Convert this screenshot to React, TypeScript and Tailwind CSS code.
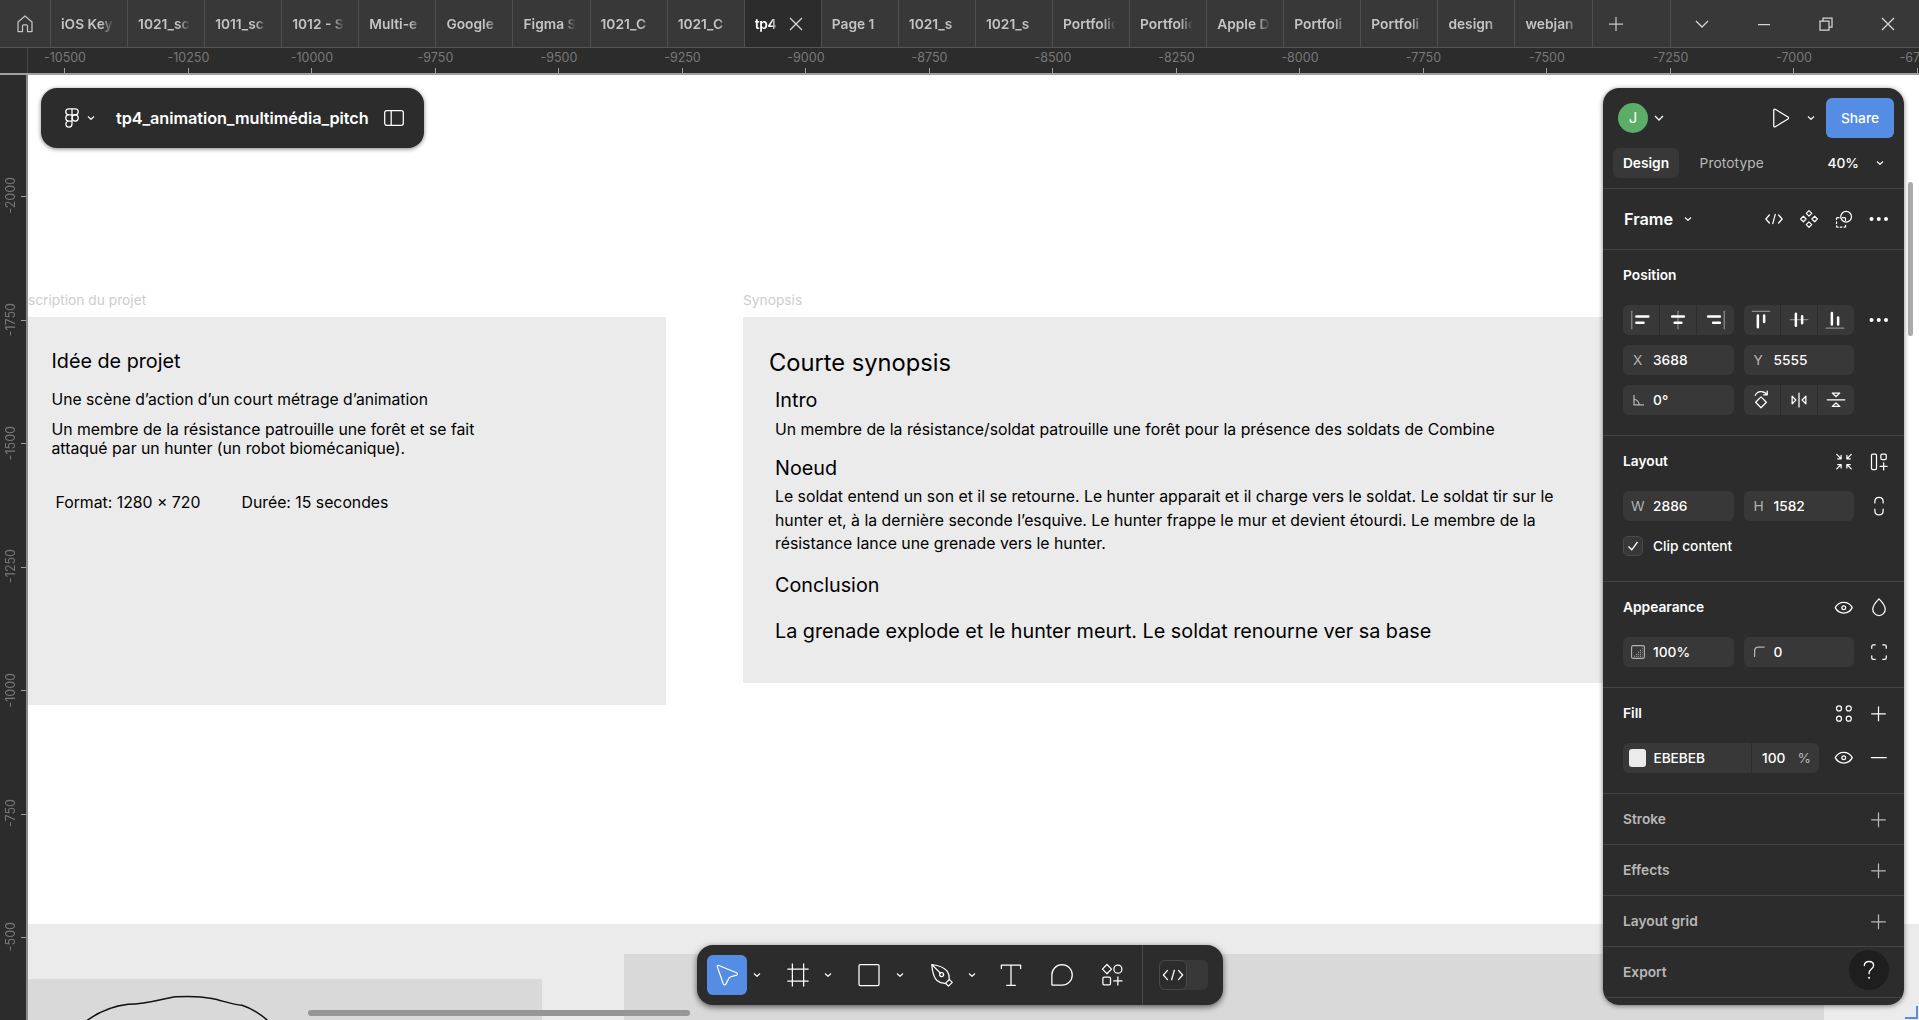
import type { ReactNode } from "react";

const TABS = [
  "iOS Keyl", "1021_sc", "1011_sc", "1012 - S", "Multi-e", "Google", "Figma S", "1021_C", "1021_C", "tp4",
  "Page 1", "1021_s", "1021_s", "Portfolic", "Portfolic", "Apple D", "Portfoli", "Portfoli", "design", "webjan",
];
const ACTIVE_TAB = 9;

const H_LABELS = [-10500, -10250, -10000, -9750, -9500, -9250, -9000, -8750, -8500, -8250, -8000, -7750, -7500, -7250, -7000, -6750];
const V_LABELS = [-2000, -1750, -1500, -1250, -1000, -750, -500];

/* Icons are drawn on a 24-unit grid and shown at 30px. */
function Icon({ children, className = "" }: { children: ReactNode; className?: string }) {
  return (
    <svg
      viewBox="0 0 24 24"
      className={`h-[30px] w-[30px] shrink-0 ${className}`}
      fill="none"
      stroke="currentColor"
      strokeWidth="1"
      strokeLinecap="round"
      strokeLinejoin="round"
    >
      {children}
    </svg>
  );
}

const Chevron = ({ className = "" }: { className?: string }) => (
  <svg viewBox="0 0 10 10" className={`h-[10px] w-[10px] shrink-0 ${className}`} fill="none" stroke="currentColor" strokeWidth="1.2" strokeLinecap="round" strokeLinejoin="round">
    <path d="M2.3 3.8 5 6.4 7.7 3.8" />
  </svg>
);

const CodeIcon = ({ className = "" }) => (
  <Icon className={className}>
    <path d="M7.600 8.300 4.300 12l3.300 3.700M16.400 8.300l3.300 3.700-3.300 3.700M13.100 8.200l-2.200 7.600" />
  </Icon>
);
const SmallCodeIcon = () => (
  <Icon>
    <path d="M8.300 8.800 5.500 12l2.800 3.200M15.700 8.800l2.800 3.200-2.800 3.200M13 8.300l-2 7.400" />
  </Icon>
);
const Plus = () => (
  <Icon>
    <path d="M11.600 6.300v11M6.100 11.800h11" />
  </Icon>
);
const Dots = () => (
  <Icon>
    <g fill="currentColor" stroke="none">
      <circle cx="6" cy="12" r="1.600" />
      <circle cx="11.800" cy="12" r="1.600" />
      <circle cx="17.600" cy="12" r="1.600" />
    </g>
  </Icon>
);
const Eye = () => (
  <Icon>
    <path d="M5 11.700C6.400 8.900 8.900 7.400 11.800 7.400s5.400 1.500 6.800 4.300c-1.400 2.800-3.900 4.300-6.800 4.300S6.400 14.500 5 11.700Z" />
    <circle cx="11.800" cy="11.700" r="1.500" />
  </Icon>
);

function TitleBar() {
  return (
    <header className="flex h-12 shrink-0 border-b border-[#555] bg-[#383838] text-[#c4c4c4]">
      <div className="flex w-[51px] shrink-0 items-center justify-center border-r border-[#4f4f4f]">
        <svg viewBox="0 0 20 20" className="h-5 w-5" fill="none" stroke="currentColor" strokeWidth="1.250" strokeLinejoin="round">
          <path d="M3 8 10 2l7 6v9.500h-4.500V12a1.200 1.200 0 0 0-1.200-1.200H8.700A1.200 1.200 0 0 0 7.500 12v5.500H3V8Z" />
        </svg>
      </div>
      {TABS.map((name, i) =>
        i === ACTIVE_TAB ? (
          <div key={i} className="flex w-[77.080px] shrink-0 items-center border-r border-[#4f4f4f] bg-[#2c2c2c] pl-[10px] text-white">
            <span className="w-[26px] whitespace-nowrap pt-px text-[13.750px] font-semibold tracking-[-0.300px] [mask-image:linear-gradient(to_right,black_60%,transparent_95%)]">
              {name}
            </span>
            <svg viewBox="0 0 14 14" className="ml-[8px] h-[14px] w-[14px]" fill="none" stroke="#d8d8d8" strokeWidth="1.250">
              <path d="M1 1l12 12M13 1 1 13" />
            </svg>
          </div>
        ) : (
          <div key={i} className="flex w-[77.080px] shrink-0 items-center border-r border-[#4f4f4f] pl-[10px]">
            <span className="w-[62px] whitespace-nowrap pt-px text-[13.750px] font-semibold [mask-image:linear-gradient(to_right,black_65%,transparent_85%)]">
              {name}
            </span>
          </div>
        ),
      )}
      <div className="flex w-[78px] shrink-0 items-center border-r border-[#4f4f4f] pl-4">
        <svg viewBox="0 0 14 14" className="h-[14px] w-[14px]" fill="none" stroke="currentColor" strokeWidth="1.250">
          <path d="M7 0v14M0 7h14" />
        </svg>
      </div>
      <div className="grid flex-1 grid-cols-4 place-items-center text-[#d6d6d6]">
        <svg viewBox="0 0 14 14" className="h-[14px] w-[14px]" fill="none" stroke="currentColor" strokeWidth="1.250"><path d="M1 4l6 6 6-6" /></svg>
        <svg viewBox="0 0 14 14" className="h-[14px] w-[14px]" fill="none" stroke="currentColor" strokeWidth="1.250"><path d="M1 7.600h12" /></svg>
        <svg viewBox="0 0 14 14" className="h-[14px] w-[14px]" fill="none" stroke="currentColor" strokeWidth="1.250"><path d="M1 4h9v9H1zM4 4V1h9v9h-3" /></svg>
        <svg viewBox="0 0 14 14" className="h-[14px] w-[14px]" fill="none" stroke="currentColor" strokeWidth="1.250"><path d="M1 1l12 12M13 1 1 13" /></svg>
      </div>
    </header>
  );
}

function HorizontalRuler() {
  return (
    <div className="flex h-[27px] shrink-0 overflow-hidden border-b-2 border-[#a0a0a0] bg-[#2c2c2c] text-[#787878]">
      <div className="-mr-[24.800px] w-7 shrink-0 border-r border-[#484848]" />
      {H_LABELS.map((n) => (
        <div key={n} className="flex w-[123.500px] shrink-0 flex-col items-center justify-between pt-[3px]">
          <span className="text-[12.500px] leading-[14px]">{n}</span>
          <span className="h-[5px] w-px bg-[#a0a0a0]" />
        </div>
      ))}
    </div>
  );
}

function VerticalRuler() {
  return (
    <div className="flex w-7 shrink-0 flex-col border-r-2 border-[#8a8a8a] bg-[#2c2c2c] pt-[60px] text-[#787878]">
      {V_LABELS.map((n) => (
        <div key={n} className="flex h-[123.500px] shrink-0 items-center justify-between pl-[4px]">
          <span className="mb-[2px] rotate-180 text-[12.500px] leading-[14px] [writing-mode:vertical-rl]">{n}</span>
          <span className="h-px w-[5px] bg-[#a0a0a0]" />
        </div>
      ))}
    </div>
  );
}

function Canvas() {
  return (
    <main className="relative flex-1 overflow-hidden bg-white text-black">
      <p className="absolute left-0 top-[216px] whitespace-nowrap text-[13.750px] leading-[18px] text-[#cdcdcd]">scription du projet</p>
      <section className="absolute left-0 top-[242px] h-[388px] w-[638px] bg-[#ebebeb]">
        <h2 className="absolute left-[23.500px] top-[32px] whitespace-nowrap text-[19.760px] leading-6">Idée de projet</h2>
        <p className="absolute left-[23.500px] top-[73px] whitespace-nowrap text-[15.700px] leading-[19px]">Une scène d’action d’un court métrage d’animation</p>
        <p className="absolute left-[23.500px] top-[103px] whitespace-nowrap text-[15.800px] leading-[19.300px]">
          Un membre de la résistance patrouille une forêt et se fait
          <br />
          attaqué par un hunter (un robot biomécanique).
        </p>
        <p className="absolute left-[27.500px] top-[176px] whitespace-nowrap text-[15.800px] leading-[19px]">Format: 1280 × 720</p>
        <p className="absolute left-[213.500px] top-[176px] whitespace-nowrap text-[15.800px] leading-[19px]">Durée: 15 secondes</p>
      </section>

      <p className="absolute left-[715px] top-[216px] text-[13.750px] leading-[18px] text-[#cdcdcd]">Synopsis</p>
      <section className="absolute left-[715px] top-[242px] h-[366px] w-[1140px] bg-[#ebebeb]">
        <h2 className="absolute left-[26px] top-[31px] whitespace-nowrap text-[23.700px] leading-[29px]">Courte synopsis</h2>
        <h3 className="absolute left-[32px] top-[71px] text-[19.760px] leading-6">Intro</h3>
        <p className="absolute left-[32px] top-[103px] whitespace-nowrap text-[15.800px] leading-[19px]">
          Un membre de la résistance/soldat patrouille une forêt pour la présence des soldats de Combine
        </p>
        <h3 className="absolute left-[32px] top-[139px] text-[19.760px] leading-6">Noeud</h3>
        <p className="absolute left-[32px] top-[168px] whitespace-nowrap text-[15.820px] leading-[23.700px]">
          Le soldat entend un son et il se retourne. Le hunter apparait et il charge vers le soldat. Le soldat tir sur le
          <br />
          hunter et, à la dernière seconde l’esquive. Le hunter frappe le mur et devient étourdi. Le membre de la
          <br />
          résistance lance une grenade vers le hunter.
        </p>
        <h3 className="absolute left-[32px] top-[256px] text-[19.760px] leading-6">Conclusion</h3>
        <p className="absolute left-[32px] top-[302px] whitespace-nowrap text-[19.780px] leading-6">
          La grenade explode et le hunter meurt. Le soldat renourne ver sa base
        </p>
      </section>

      <section className="absolute left-0 top-[849px] h-[120px] w-[1900px] bg-[#ebebeb]">
        <div className="absolute left-0 top-[55px] h-16 w-[513.500px] bg-[#d9d9d9]">
          <svg viewBox="0 0 513 64" className="h-16 w-[513px]" fill="none" stroke="#111" strokeWidth="1.500">
            <path d="M57 43C70 33 86 27 100 25.300 122 25 136 19 148 17.800 160 17 174 17.500 184 19.500 194 21.500 204 25.500 214 26.300 224 29.500 236 37 243 45" />
          </svg>
        </div>
        <div className="absolute left-[596px] top-[30px] h-[90px] w-[1200px] bg-[#d9d9d9]" />
      </section>

      <div className="absolute left-[280px] top-[935px] h-[6px] w-[382px] rounded-full bg-[#969696]" />
      <div className="absolute right-[6px] top-[107px] h-[154px] w-[5px] rounded-full bg-[#ababab]" />
      <div className="absolute bottom-px right-px h-[13px] w-[13px] border-b-2 border-r-2 border-[#5b8ce0]" />
    </main>
  );
}

function FileBar() {
  return (
    <div className="absolute left-[41px] top-[88px] flex h-[60px] w-[383px] items-center rounded-2xl bg-[#2c2c2c] text-white shadow-[0_1px_4px_rgba(0,0,0,0.5)]">
      <svg viewBox="0 0 14 20" className="ml-[24px] h-5 w-[14px]" fill="none" stroke="currentColor" strokeWidth="1.250">
        <path d="M7 .8H3.800a3.050 3.050 0 0 0 0 6.100H7V.8ZM7 .8h3.200a3.050 3.050 0 0 1 0 6.100H7M7 6.900H3.800a3.050 3.050 0 0 0 0 6.100H7V6.900ZM7 13H3.800A3.050 3.050 0 1 0 7 16V13Z" />
        <circle cx="10.200" cy="9.950" r="3.050" />
      </svg>
      <Chevron className="ml-[7px]" />
      <h1 className="ml-5 w-[253px] whitespace-nowrap pb-px text-[16.250px] font-semibold leading-5 tracking-[-0.060px]">tp4_animation_multimédia_pitch</h1>
      <svg viewBox="0 0 20 16" className="ml-[15px] h-4 w-5" fill="none" stroke="currentColor" strokeWidth="1.250">
        <rect x=".7" y=".7" width="18.600" height="14.600" rx="2" />
        <path d="M7.200 .7v14.600" />
      </svg>
    </div>
  );
}

function Toolbar() {
  return (
    <nav className="absolute left-[697px] top-[945px] flex h-[60px] w-[526px] items-center rounded-2xl bg-[#2c2c2c] text-white shadow-[0_2px_6px_rgba(0,0,0,0.6)]">
      <button className="ml-[10px] flex h-10 w-10 items-center justify-center rounded-[6px] bg-[#558ce4]">
        <Icon><path d="M5.400 4.400c-.9-.3-1.400.3-1.100 1.100l4.700 13.600c.4 1 1.600 1 2.100.2l2.600-5c.2-.4.4-.6.800-.7l5.100-1.500c.9-.3 1-1.500.1-1.900L5.400 4.400Z" /></Icon>
      </button>
      <Chevron className="ml-[5px]" />
      <Icon className="ml-[21px]"><path d="M7.500 2.800v18.400M16.500 2.800v18.400M3.500 7.200h17M3.500 16.800h17" strokeLinecap="butt" /></Icon>
      <Chevron className="ml-[10px]" />
      <Icon className="ml-[21px]"><rect x="4" y="3.600" width="16" height="16.800" rx="1" /></Icon>
      <Chevron className="ml-[11px]" />
      <Icon className="ml-[22px]">
        <path d="M3.800 3.600c5.200.7 9.700 2 12.300 5.300 1.500 2 1.800 4.300 1.700 6.600l2.400 2.400-3 3-2.300-2.300c-2.500.1-4.800-.4-6.700-2C5 13.800 4.200 8.800 3.800 3.600ZM4.100 3.900l6.700 6.700M14.500 18.900l3.300-3.300" />
        <circle cx="11.700" cy="11.600" r="1.600" />
      </Icon>
      <Chevron className="ml-[10px]" />
      <Icon className="ml-[19px]"><path d="M4.300 6.800V4h15.400v2.800M12 4v16.200M8.500 20.200h7" /></Icon>
      <Icon className="ml-[21px]"><path d="M12 3.700a8.200 8.200 0 1 1 0 16.400H4.300a.4.400 0 0 1-.4-.4V12A8.200 8.200 0 0 1 12 3.700Z" /></Icon>
      <Icon className="ml-[20px]">
        <path d="M8 3.600 11.600 7.300 8 11 4.300 7.300ZM16.700 13.500v6.500M13.400 16.700H20" />
        <circle cx="16.700" cy="7.300" r="3.200" />
        <rect x="4.700" y="13.700" width="6.100" height="6.100" rx="1" />
      </Icon>
      <div className="ml-[15px] h-full w-px bg-[#4a4a4a]" />
      <div className="ml-[16px] flex h-[30px] w-[49px] items-center rounded-[6px] bg-[#383838]">
        <div className="flex h-[30px] w-[28px] items-center justify-center rounded-[6px] border border-[#484848] bg-[#2c2c2c]">
          <CodeIcon className="-m-1" />
        </div>
      </div>
    </nav>
  );
}

function Field({ label, value }: { label: ReactNode; value: string }) {
  return (
    <div className="flex h-[30px] w-[110.500px] shrink-0 items-center rounded-[6px] bg-[#383838] pl-[10px]">
      <span className="flex w-5 shrink-0 text-[#b4b4b4]">{label}</span>
      <span className="font-medium">{value}</span>
    </div>
  );
}

function Segments({ items }: { items: ReactNode[] }) {
  return (
    <div className="grid h-[30px] w-[110.500px] shrink-0 grid-cols-3 gap-px overflow-hidden rounded-[6px]">
      {items.map((item, i) => (
        <div key={i} className="flex items-center justify-center bg-[#383838]">{item}</div>
      ))}
    </div>
  );
}

const GRAY = "#8a8a8a";
const H_ALIGN = [
  <Icon key="l"><path d="M4.600 5v14" stroke={GRAY} /><path d="M8.300 9.200h9.600M8.300 14.200h5.700" strokeWidth="2" /></Icon>,
  <Icon key="c"><path d="M12 5v14" stroke={GRAY} /><path d="M7.300 9.200h9.400M9.300 14.200h5.400" strokeWidth="2" /></Icon>,
  <Icon key="r"><path d="M19.400 5v14" stroke={GRAY} /><path d="M6.500 9.200h9.400M10.500 14.200h5.400" strokeWidth="2" /></Icon>,
];
const V_ALIGN = [
  <Icon key="t" className="-ml-[2px]"><path d="M5 5h14" stroke={GRAY} /><path d="M9.500 8.300v9.400M14.500 8.300v5.200" strokeWidth="2" /></Icon>,
  <Icon key="m"><path d="M5 11.700h14" stroke={GRAY} /><path d="M9.500 7v9.500M14.500 9v5.500" strokeWidth="2" /></Icon>,
  <Icon key="b" className="-ml-px"><path d="M5 18.500h14" stroke={GRAY} /><path d="M9.500 6.300v9.200M14.500 10v5.500" strokeWidth="2" /></Icon>,
];
const TRANSFORMS = [
  <Icon key="rot" className="-ml-[2px]"><path d="m12 9.500 4.300 4.300-4.300 4.400-4.300-4.400ZM7.400 8.300C9 4.500 14.200 4.200 16.700 7.600M17 4.800v3h-3" /></Icon>,
  <Icon key="fh"><path d="M12 6.500v11M6.500 9v6l3-3ZM17.500 9v6l-3-3Z" /></Icon>,
  <Icon key="fv"><path d="M5 11.800h14M9 6.500h6l-3 2.700ZM9 17.100h6l-3-2.700Z" /></Icon>,
];

function SectionTitle({ children, actions }: { children: ReactNode; actions?: ReactNode }) {
  return (
    <div className="flex h-[51px] shrink-0 items-center">
      <h2 className="flex-1 pb-[2px] font-semibold">{children}</h2>
      <div className="flex gap-[5px]">{actions}</div>
    </div>
  );
}

const SECTION = "border-t border-[#444] pl-5 pr-[10px]";

function Inspector() {
  return (
    <aside className="absolute left-[1603px] top-[88px] flex h-[917px] w-[301px] flex-col overflow-hidden rounded-2xl bg-[#2c2c2c] text-[13.750px] leading-5 text-white">
      <div className="h-[100px] shrink-0 pt-[10px]">
        <div className="flex h-10 items-center pl-[15px] pr-[10px]">
          <span className="flex h-[30px] w-[30px] items-center justify-center rounded-full bg-[#5cad67] text-[15px]">J</span>
          <svg viewBox="0 0 12 12" className="ml-[5px] h-3 w-3" fill="none" stroke="currentColor" strokeWidth="1.300"><path d="M2 4l4 4 4-4" /></svg>
          <Icon className="ml-[101px]"><path d="M6.200 5.700c0-.7.600-1.100 1.200-.7l10.200 6.200c.6.400.6 1.200 0 1.600L7.400 19c-.6.400-1.200 0-1.200-.7V5.700Z" /></Icon>
          <Chevron className="ml-[10px]" />
          <button className="ml-[10px] h-10 w-[68px] shrink-0 rounded-[6px] bg-[#558ce4] font-medium">Share</button>
        </div>
        <div className="mt-[10px] flex h-[30px] items-center pl-[10px]">
          <span className="flex h-full w-[66px] items-center justify-center rounded-[6px] bg-[#383838] font-semibold">Design</span>
          <span className="ml-[20.500px] tracking-[0.100px] text-[#b8b8b8]">Prototype</span>
          <span className="ml-auto font-medium">40%</span>
          <Chevron className="ml-[16px] mr-[19px]" />
        </div>
      </div>

      <section className={`${SECTION} flex h-[61px] shrink-0 items-center`}>
        <h2 className="ml-px pb-px text-[16.250px] font-semibold">Frame</h2>
        <Chevron className="ml-[10px]" />
        <div className="ml-auto flex gap-[5px]">
          <SmallCodeIcon />
          <Icon><path d="m12 5.300 2.200 2.200L12 9.700 9.800 7.500ZM12 14.300l2.200 2.200-2.200 2.200-2.200-2.200ZM7.500 9.800 9.700 12l-2.200 2.200L5.300 12ZM16.500 9.800l2.200 2.200-2.200 2.200-2.200-2.200Z" /></Icon>
          <Icon>
            <circle cx="13.700" cy="10.200" r="4.300" />
            <path d="M8 10.900H6.700a.7.700 0 0 0-.7.700v.7M6 14.300v1.300M6 17.400v.3c0 .4.300.7.700.7h.6M9 18.400h1.300M12 18.400h.6c.4 0 .7-.3.700-.7V17M10.800 10.900h1.700c.4 0 .7.300.7.700v1.500" />
          </Icon>
          <Dots />
        </div>
      </section>

      <section className={`${SECTION} h-[186px] shrink-0`}>
        <SectionTitle>Position</SectionTitle>
        <div className="mt-[4px] flex items-center gap-[10px]">
          <Segments items={H_ALIGN} />
          <Segments items={V_ALIGN} />
          <Dots />
        </div>
        <div className="mt-[10px] flex gap-[10px]">
          <Field label="X" value="3688" />
          <Field label="Y" value="5555" />
        </div>
        <div className="mt-[10px] flex gap-[10px]">
          <Field
            label={<svg viewBox="0 0 12 12" className="h-3 w-3" fill="none" stroke="currentColor" strokeWidth="1.250"><path d="M1 1v9.800h10M1 5.500a5 5 0 0 1 5 5.300" /></svg>}
            value="0°"
          />
          <Segments items={TRANSFORMS} />
        </div>
      </section>

      <section className={`${SECTION} h-[146px] shrink-0`}>
        <SectionTitle
          actions={
            <>
              <Icon><path d="M6.200 6.200l3.200 3.200M9.700 7v2.700H7M17.800 6.200l-3.200 3.200M14.300 7v2.700H17M6.200 17.800l3.200-3.200M9.700 17v-2.700H7M17.800 17.800l-3.200-3.200M14.300 17v-2.700H17" transform="translate(0 -.3)" /></Icon>
              <Icon><rect x="6" y="5.700" width="4" height="12.300" rx="1" /><rect x="13.500" y="5.700" width="4.300" height="4.300" rx="1" /><path d="M15.700 12.700v5.600M12.900 15.500h5.600" /></Icon>
            </>
          }
        >
          Layout
        </SectionTitle>
        <div className="mt-[4px] flex gap-[10px]">
          <Field label={<span className="-ml-0.5">W</span>} value="2886" />
          <Field label="H" value="1582" />
          <Icon><path d="M8.700 9.500V8.300c0-2.100 1.200-3.300 3.300-3.300s3.300 1.200 3.300 3.300v1.200M8.700 14.500v1.200c0 2.100 1.200 3.300 3.300 3.300s3.300-1.200 3.300-3.300v-1.200" /></Icon>
        </div>
        <div className="mt-[15px] flex items-center">
          <span className="flex h-5 w-5 items-center justify-center rounded-[5px] border border-[#4a4a4a] bg-[#383838]">
            <svg viewBox="0 0 12 12" className="h-3 w-3" fill="none" stroke="currentColor" strokeWidth="1.300"><path d="M1.500 6.500 4.800 9.800 10.500 2" /></svg>
          </span>
          <span className="ml-[10px] font-medium">Clip content</span>
        </div>
      </section>

      <section className={`${SECTION} h-[106px] shrink-0`}>
        <SectionTitle
          actions={
            <>
              <Eye />
              <Icon><path d="M12 5c3 3 5 5.600 5 8.300a5 5 0 0 1-10 0C7 10.600 9 8 12 5Z" transform="translate(0 -.3)" /></Icon>
            </>
          }
        >
          Appearance
        </SectionTitle>
        <div className="mt-[4px] flex gap-[10px]">
          <Field
            label={
              <svg viewBox="0 0 14 14" className="-ml-[2px] h-[14px] w-[14px]" fill="none" stroke="currentColor" strokeWidth="1.100">
                <rect x=".6" y=".6" width="12.800" height="12.800" rx="1.500" />
                <path d="M3 11.300h8.500M5 9.300h6.500M7 7.300h4.500M9 5.300h2.500M11 3.300h.8" strokeDasharray="1 1" />
              </svg>
            }
            value="100%"
          />
          <Field
            label={<svg viewBox="0 0 12 12" className="h-3 w-3" fill="none" stroke="currentColor" strokeWidth="1.250"><path d="M.6 11V5c0-2.600 1.400-4 4-4h6" /></svg>}
            value="0"
          />
          <Icon><path d="M6.200 9V7.500c0-.8.500-1.300 1.300-1.300H9M15 6.200h1.500c.8 0 1.300.5 1.300 1.300V9M17.800 15v1.500c0 .8-.5 1.300-1.300 1.300H15M9 17.800H7.500c-.8 0-1.300-.5-1.300-1.300V15" /></Icon>
        </div>
      </section>

      <section className={`${SECTION} h-[106px] shrink-0`}>
        <SectionTitle
          actions={
            <>
              <Icon><circle cx="8" cy="7.500" r="2" /><circle cx="15.800" cy="7.500" r="2" /><circle cx="8" cy="15.700" r="2" /><circle cx="15.800" cy="15.700" r="2" /></Icon>
              <Plus />
            </>
          }
        >
          Fill
        </SectionTitle>
        <div className="mt-[4px] flex font-medium">
          <div className="flex h-[30px] w-[128px] items-center rounded-l-[6px] bg-[#383838] pl-[6px]">
            <span className="h-[18px] w-[17px] rounded-[3px] bg-[#ebebeb]" />
            <span className="ml-[7.500px] tracking-[-0.100px]">EBEBEB</span>
          </div>
          <div className="ml-px flex h-[30px] w-[67px] items-center justify-between rounded-r-[6px] bg-[#383838] pl-[10px] pr-[8px]">
            <span>100</span>
            <span className="font-normal text-[#b4b4b4]">%</span>
          </div>
          <div className="ml-[10px] flex gap-[5px]">
            <Eye />
            <Icon><path d="M5.800 11.600h12" /></Icon>
          </div>
        </div>
      </section>

      {["Stroke", "Effects", "Layout grid", "Export"].map((name) => (
        <section key={name} className={`${SECTION} h-[51px] shrink-0 text-[#b8b8b8]`}>
          <SectionTitle actions={name !== "Export" && <Plus />}>{name}</SectionTitle>
        </section>
      ))}
      <div className="border-t border-[#444]" />
    </aside>
  );
}

export default function App() {
  return (
    <div className="relative flex h-[1020px] w-[1919px] flex-col overflow-hidden bg-[#2c2c2c] font-['Inter',sans-serif]">
      <TitleBar />
      <HorizontalRuler />
      <div className="flex min-h-0 flex-1">
        <VerticalRuler />
        <Canvas />
      </div>
      <FileBar />
      <Toolbar />
      <div className="absolute left-[1603px] top-[88px] h-[917px] w-[301px] rounded-2xl shadow-[0_1px_5px_rgba(0,0,0,0.5)]" />
      <Inspector />
      <button className="absolute left-[1849px] top-[950px] flex h-10 w-10 items-center justify-center rounded-full bg-[#1e1e1e] text-white">
        <svg viewBox="0 0 14 20" className="h-5 w-[14px]" fill="none" stroke="currentColor" strokeWidth="1.300" strokeLinecap="round">
          <path d="M2.300 5.500C2.500 3 4.300 1.500 7 1.500c2.700 0 4.600 1.600 4.600 4 0 3.400-4.500 3.700-4.500 7.500v.7" />
          <circle cx="7.100" cy="17.800" r=".4" fill="currentColor" />
        </svg>
      </button>
    </div>
  );
}
